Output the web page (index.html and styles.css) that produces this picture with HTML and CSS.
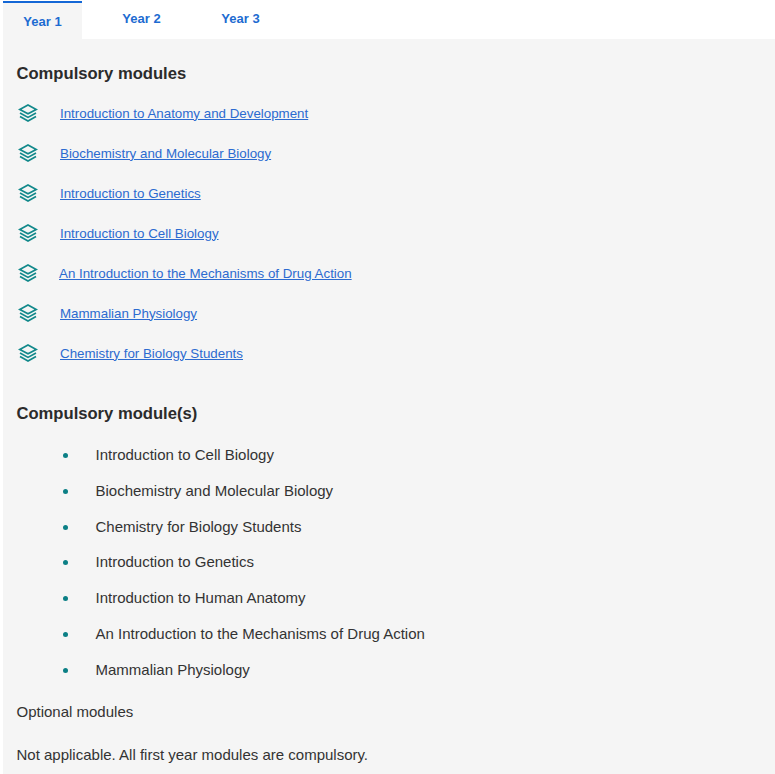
FILE: index.html
```html
<!DOCTYPE html>
<html lang="en">

<head>
    <meta charset="UTF-8">
    <title>Course modules</title>
    <link rel="stylesheet" href="styles.css">
</head>

<body>
    <svg class="icon-defs" width="0" height="0">
        <symbol id="layers" viewBox="0 0 20 20">
            <path d="M10 2 18.2 6.4 10 10.8 1.8 6.4Z" />
            <path d="M2 10 10 14.4 18 10" />
            <path d="M2 13.6 10 18 18 13.6" />
        </symbol>
    </svg>

    <div class="tabs">
        <a class="tab active">Year 1</a>
        <a class="tab">Year 2</a>
        <a class="tab">Year 3</a>
    </div>

    <div class="panel">
        <h2>Compulsory modules</h2>

        <ul class="module-links">
            <li><svg class="layers"><use href="#layers" /></svg><a href="#">Introduction to Anatomy and Development</a></li>
            <li><svg class="layers"><use href="#layers" /></svg><a href="#">Biochemistry and Molecular Biology</a></li>
            <li><svg class="layers"><use href="#layers" /></svg><a href="#">Introduction to Genetics</a></li>
            <li><svg class="layers"><use href="#layers" /></svg><a href="#">Introduction to Cell Biology</a></li>
            <li class="tight"><svg class="layers"><use href="#layers" /></svg><a href="#">An Introduction to the Mechanisms of Drug Action</a></li>
            <li><svg class="layers"><use href="#layers" /></svg><a href="#">Mammalian Physiology</a></li>
            <li><svg class="layers"><use href="#layers" /></svg><a href="#">Chemistry for Biology Students</a></li>
        </ul>

        <h2 class="second">Compulsory module(s)</h2>

        <ul class="module-list">
            <li>Introduction to Cell Biology</li>
            <li>Biochemistry and Molecular Biology</li>
            <li>Chemistry for Biology Students</li>
            <li>Introduction to Genetics</li>
            <li>Introduction to Human Anatomy</li>
            <li>An Introduction to the Mechanisms of Drug Action</li>
            <li>Mammalian Physiology</li>
        </ul>

        <p class="optional">Optional modules</p>
        <p class="note">Not applicable. All first year modules are compulsory.</p>
    </div>
</body>

</html>
```

FILE: styles.css
```css
* {
    box-sizing: border-box;
    margin: 0;
    padding: 0;
}

html,
body {
    height: 774px;
    overflow: hidden;
}

body {
    font-family: 'Liberation Sans', Arial, sans-serif;
    background-color: #fff;
    color: #333;
    padding-left: 3px;
    display: flex;
    flex-direction: column;
}

.icon-defs {
    position: absolute;
}

.tabs {
    display: flex;
    height: 39px;
}

.tab {
    width: 99px;
    padding-top: 11px;
    font-size: 13px;
    font-weight: 700;
    line-height: 16px;
    color: #1d6bd1;
    text-align: center;
}

.tab.active {
    width: 79px;
    margin-top: 1px;
    margin-right: 10px;
    padding-top: 11px;
    background-color: #f5f5f5;
    border-top: 2px solid #1467d6;
}

.panel {
    flex: 1;
    background-color: #f5f5f5;
    padding: 0 13.5px;
}

h2 {
    margin-top: 25px;
    font-size: 16.6px;
    font-weight: 700;
    line-height: 20px;
    color: #2b2b2b;
}

h2.second {
    margin-top: 31px;
}

.module-links {
    list-style: none;
    margin-top: 9px;
}

.module-links li {
    display: flex;
    align-items: center;
    height: 40px;
}

.layers {
    width: 20px;
    height: 20px;
    margin-left: 1px;
    margin-right: 22.5px;
    fill: none;
    stroke: #12898b;
    stroke-width: 1.7;
}

.module-links .tight .layers {
    margin-right: 21.5px;
}

.module-links a {
    font-size: 13.33px;
    color: #2c6bd0;
}

.module-list {
    list-style: none;
    margin-top: 21px;
    padding-left: 79px;
}

.module-list li {
    position: relative;
    font-size: 15px;
    line-height: 20px;
    margin-bottom: 15.8px;
}

.module-list li::before {
    content: "";
    position: absolute;
    left: -33px;
    top: 8px;
    width: 5px;
    height: 5px;
    border-radius: 50%;
    background-color: #0b7f85;
}

.optional,
.note {
    font-size: 15px;
    line-height: 20px;
}

.optional {
    margin-top: 22px;
}

.note {
    margin-top: 23px;
}
```
